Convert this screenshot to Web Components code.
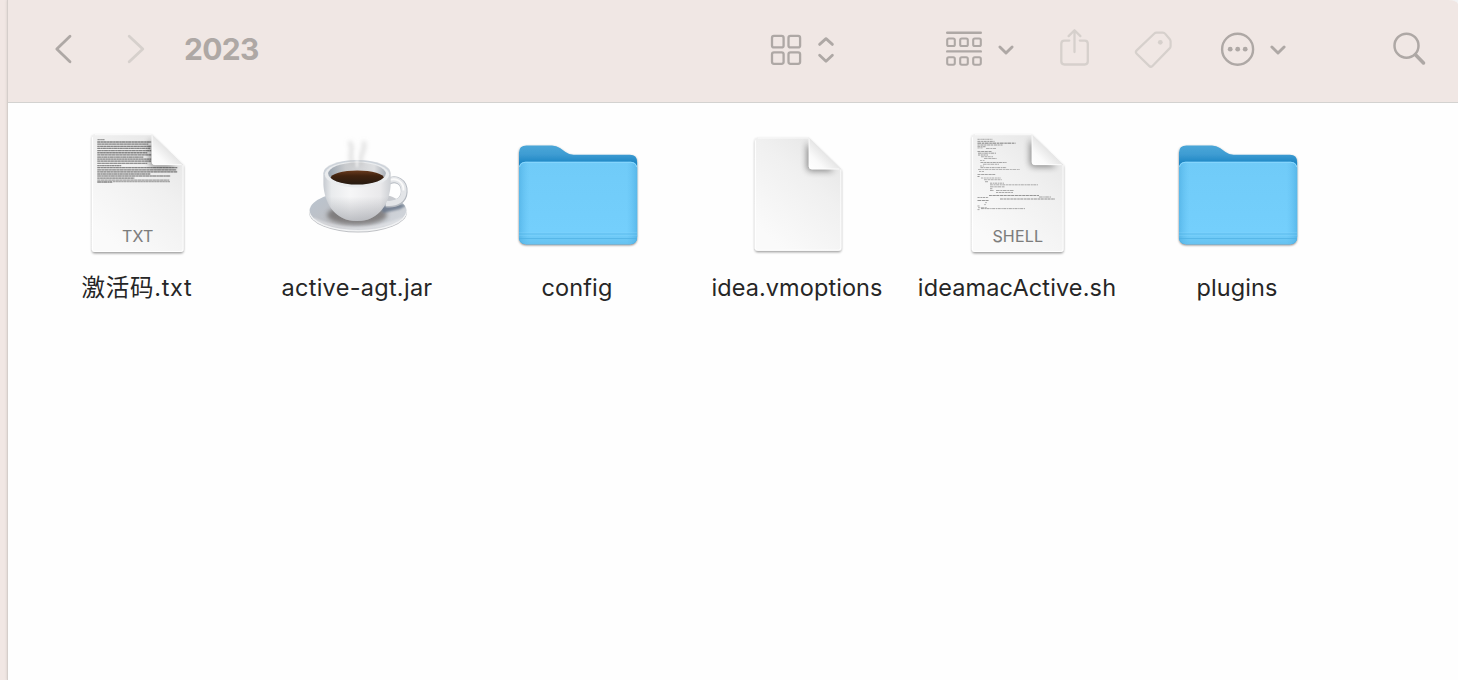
<!DOCTYPE html>
<html lang="zh">
<head>
<meta charset="utf-8">
<title>2023</title>
<style>
html,body{margin:0;height:100%;overflow:hidden}
body{background:linear-gradient(90deg,#f1e7e4 50%,#f3f4f5 50%);font-family:Inter,"Noto Sans CJK SC",sans-serif;color:#262626}
</style>
</head>
<body>
<finder-window>
  <finder-toolbar slot="toolbar" heading="2023"></finder-toolbar>
  <file-item kind="txt" style="--ls:.7px">激活码.txt</file-item>
  <file-item kind="jar" style="--ls:.28px">active-agt.jar</file-item>
  <file-item kind="folder" style="--ls:.1px">config</file-item>
  <file-item kind="blank" style="--ls:.08px">idea.vmoptions</file-item>
  <file-item kind="shell" style="--ls:.14px">ideamacActive.sh</file-item>
  <file-item kind="folder" style="--ls:.1px">plugins</file-item>
</finder-window>
<script>
// Toolbar glyphs: [viewBox, markup]
const GLYPHS = {
  back: ['52 29 22 40', '<path d="M70 36.2 56.8 49 70 61.8" stroke-width="2.8"/>'],
  forward: ['125 29 22 40', '<path d="M129.2 36.2 142.8 49 129.2 61.8" stroke-width="2.8"/>'],
  grid: ['768 29 36 40', '<g stroke-width="2.3"><rect x="772" y="35.9" width="11.6" height="11.5" rx="2"/><rect x="788.5" y="35.9" width="11.6" height="11.5" rx="2"/><rect x="772" y="52.3" width="11.6" height="11.5" rx="2"/><rect x="788.5" y="52.3" width="11.6" height="11.5" rx="2"/></g>'],
  updown: ['814 29 24 40', '<path d="M819.6 44.4 826 38.6 832.4 44.4M819.6 55.2 826 61.2 832.4 55.2" stroke-width="2.8"/>'],
  group: ['944 29 40 40', '<path d="M947.2 32.7H980.8M947.2 51.4H980.8" stroke-width="2.4"/><g stroke-width="2.1">' +
    [37.4, 56.1].map(y => [946.1, 959.1, 972.1].map(x => `<rect x="${x + 1.1}" y="${y + 1.1}" width="7.6" height="7.5" rx="1.6"/>`).join('')).join('') + '</g>'],
  chev: ['994 29 24 40', '<path d="M999.9 47 1006 53 1012.1 47" stroke-width="2.9"/>'],
  share: ['1056 27 38 42', '<path d="M1069.3 40.6H1064.4Q1061.3 40.6 1061.3 43.7V61.3Q1061.3 64.5 1064.4 64.5H1084.7Q1087.8 64.5 1087.8 61.3V43.7Q1087.8 40.6 1084.7 40.6H1079.8M1074.5 52V30.4M1068.6 36.1 1074.5 30.2 1080.4 36.1" stroke-width="2.3"/>'],
  tag: ['1132 28 42 42', '<path d="M1156.6 32.7H1162.8Q1164.3 32.7 1165.3 33.9L1169.8 39.2Q1170.6 40.2 1170.6 41.5V46Q1170.6 47.4 1169.6 48.4L1152.5 65.9Q1150.8 67.6 1149.1 65.9L1136.7 53.8Q1135 52.1 1136.7 50.4L1154.1 33.7Q1155.1 32.7 1156.6 32.7Z" stroke-width="2.2"/><circle cx="1160.3" cy="42.3" r="2.4" fill="currentColor" stroke="none"/>'],
  more: ['1218 29 40 40', '<circle cx="1237.6" cy="49.2" r="15.5" stroke-width="2.4"/><g fill="currentColor" stroke="none"><circle cx="1230.2" cy="49.2" r="2.4"/><circle cx="1237.7" cy="49.2" r="2.4"/><circle cx="1245.2" cy="49.2" r="2.4"/></g>'],
  search: ['1390.5 29 38 40', '<circle cx="1406" cy="45.7" r="12" stroke-width="2.5"/><path d="M1415 54.8 1423 62.9" stroke-width="3.6"/>']
};

class ToolGlyph extends HTMLElement {
  constructor() { super(); this.attachShadow({mode: 'open'}); }
  connectedCallback() {
    const [vb, art] = GLYPHS[this.getAttribute('name')];
    const [, , w, h] = vb.split(' ');
    this.shadowRoot.innerHTML = `<style>:host{display:block;flex:none;color:#aea8a5}:host([dim]){color:#d6d0cc}svg{display:block}</style>
      <svg width="${w}" height="${h}" viewBox="${vb}" fill="none" stroke="currentColor" stroke-linecap="round" stroke-linejoin="round">${art}</svg>`;
  }
}
customElements.define('tool-glyph', ToolGlyph);

class FinderToolbar extends HTMLElement {
  constructor() { super(); this.attachShadow({mode: 'open'}); }
  connectedCallback() {
    this.shadowRoot.innerHTML = `<style>
      :host{display:flex;align-items:center;height:98px;padding:0 29px 4px 44px;background:#f0e7e4;border-bottom:1px solid #d3d2d0}
      h1{margin:0 0 0 37px;font-size:30px;line-height:40px;font-weight:700;color:#aea8a5;width:81px;letter-spacing:-.7px;white-space:nowrap}
      .nav,.view,.actions{display:flex;align-items:center}
      .nav{gap:51px}
      .view{margin-left:auto;gap:10px}
      .actions{margin-left:106px}
      .pair{display:flex;gap:10px}
      .more{gap:8px;margin-left:44px}
    </style>
    <div class="nav"><tool-glyph name="back"></tool-glyph><tool-glyph name="forward" dim></tool-glyph></div>
    <h1>${this.getAttribute('heading')}</h1>
    <div class="view"><tool-glyph name="grid"></tool-glyph><tool-glyph name="updown"></tool-glyph></div>
    <div class="actions">
      <div class="pair"><tool-glyph name="group"></tool-glyph><tool-glyph name="chev"></tool-glyph></div>
      <tool-glyph name="share" dim style="margin:-2px 0 0 38px"></tool-glyph>
      <tool-glyph name="tag" dim style="margin-left:38px"></tool-glyph>
      <div class="pair more"><tool-glyph name="more"></tool-glyph><tool-glyph name="chev"></tool-glyph></div>
      <tool-glyph name="search" style="margin-left:101px"></tool-glyph>
    </div>`;
  }
}
customElements.define('finder-toolbar', FinderToolbar);

class FinderWindow extends HTMLElement {
  constructor() {
    super();
    this.attachShadow({mode: 'open'}).innerHTML = `<style>
      :host{display:flex;flex-direction:column;height:100vh;margin-left:8px;background:#fefefe;box-shadow:-1px 0 0 #d5cecb,-2px 0 2px #e2d9d6;border-top-right-radius:10px 4px;overflow:hidden;box-sizing:border-box}
      .files{display:grid;grid-template-columns:repeat(6,220px);padding:25px 0 0 19px}
    </style><slot name="toolbar"></slot><div class="files"><slot></slot></div>`;
  }
}
customElements.define('finder-window', FinderWindow);

// Miniature preview lines: [x, y, length, opacity]
const stroke = (rows, w, solid, dash) => rows.map(([x, y, l, o], i) =>
  `<path d="M${x} ${y}h${l}" stroke="#222" stroke-opacity="${o * solid}" stroke-width="${w}"/><path d="M${x} ${y}h${l}" stroke="#222" stroke-opacity="${o * dash}" stroke-width="${w}" stroke-dasharray="${2.1 + i % 3 * .7} .9 ${1.2 + i % 4 * .6} .7"/>`).join('');
const TXT_ROWS = [[97.5, 139.6, 7, .5],
  ...[54, 51, 54, 53, 54, 50, 54, 46, 54].map((l, i) => [97.3, 142 + i * 2.15, l, .62]),
  [97.3, 161.2, 54, .62], [97.3, 163.4, 50, .55], [97.3, 165.6, 24, .6], [97.3, 167.6, 80, .62], [97.3, 169.8, 79, .62], [97.3, 171.9, 80, .65], [97.3, 174, 53, .55],
  [97.3, 176, 73, .5], [97.3, 178.1, 37, .62], [97.3, 180.1, 72, .45], [97.3, 182, 15, .65], [113, 181.7, 57, .4]];
const SH_ROWS = [[977.5, 139.3, 15, .4], [977.5, 141.4, 17, .45], [977.5, 143.2, 38, .6], [977.5, 145, 25, .45], [977.5, 146.7, 8, .45],
  [986, 148.5, 10, .35], [977.5, 148, 5, .3], [977.5, 151.5, 14, .45], [978, 153.2, 18, .45], [978, 155, 10, .45], [981, 156.7, 12, .35], [984, 158.5, 13, .35],
  [980, 160.5, 5, .3], [980.5, 162.5, 26, .42], [983, 164.3, 16, .35], [980, 166, 4, .3], [980.5, 167.6, 26, .42], [978, 169.5, 42, .32], [979, 171.5, 5, .35],
  [977.5, 174.5, 18, .42], [977.5, 176.5, 2, .5], [981, 178, 20, .35], [984, 179.7, 18, .35], [985, 181.7, 3, .4],
  [990, 183.2, 14, .4], [990, 184.8, 48, .38], [990, 186.8, 15, .4], [990, 188.7, 3, .4], [990, 190.5, 4, .4], [996, 190.5, 18, .4], [996, 192.5, 17, .4],
  [989, 195.5, 50, .52], [1039, 197, 12, .42], [977.5, 197.5, 11, .45], [1000, 199, 55, .5], [977.5, 200.5, 11, .5],
  [985, 202.6, 2, .3], [984, 204.6, 2, .3], [977.5, 206, 2, .4], [978, 207.7, 9, .35], [981, 208.6, 44, .42], [977.5, 209.6, 2, .4]]
  .map(([x, y, l, o]) => [x - 880, y, l, o]);

const page = (l, t, r, b, fx, fy, body = '') => {
  const sheet = `M${l + 3} ${t}H${fx}L${r} ${fy}V${b - 3}Q${r} ${b} ${r - 3} ${b}H${l + 3}Q${l} ${b} ${l} ${b - 3}V${t + 3}Q${l} ${t} ${l + 3} ${t}Z`;
  return `
  <defs>
    <linearGradient id="pg" x1="1" y1="0" x2=".35" y2="1"><stop offset="0" stop-color="#e3e3e3"/><stop offset=".45" stop-color="#f0f0f0"/><stop offset="1" stop-color="#fafafa"/></linearGradient>
    <linearGradient id="fold" x1="0" y1="1" x2=".55" y2=".45"><stop offset="0" stop-color="#fff"/><stop offset=".45" stop-color="#fafafa"/><stop offset="1" stop-color="#e2e2e2"/></linearGradient>
    <filter id="ds" x="-20%" y="-20%" width="140%" height="140%"><feDropShadow dx="0" dy="1.4" stdDeviation="1.1" flood-opacity=".4"/></filter>
    <filter id="bl" x="-50%" y="-50%" width="200%" height="200%"><feGaussianBlur stdDeviation="3"/></filter>
    <clipPath id="pc"><path d="${sheet}"/></clipPath>
  </defs>
  <path filter="url(#ds)" d="${sheet}" fill="url(#pg)"/>
  <g clip-path="url(#pc)"><path d="M${l + 3} ${t + .5}H${fx}M${l + .5} ${t + 3}V${b - 3}Q${l + .5} ${b - .5} ${l + 3} ${b - .5}H${r - 3}Q${r - .5} ${b - .5} ${r - .5} ${b - 3}V${fy}" fill="none" stroke="#fff"/>
  ${body}
  <path d="M${fx - 2} ${t + 5}V${fy - 2}Q${fx - 2} ${fy + 2} ${fx + 3} ${fy + 2}H${r - 7}Z" fill="#000" opacity=".42" filter="url(#bl)"/></g>
  <path d="M${fx} ${t + .2}V${fy - 3}Q${fx} ${fy} ${fx + 3} ${fy}H${r - .2}Z" fill="url(#fold)"/>
  <path d="M${fx + .3} ${t + 1}V${fy - 3}Q${fx + .3} ${fy - .3} ${fx + 3} ${fy - .3}H${r - 2}" fill="none" stroke="#fff" stroke-width=".8"/>`;
};

const badge = (t, w) => `<text x="137.7" y="242" text-anchor="middle" textLength="${w}" font-family="Inter,sans-serif" font-size="16" fill="#7c7c7c" stroke="#7c7c7c" stroke-width=".1">${t}</text>`;

const FRONT = 'M519 168.5Q519 161.8 525.5 161.8H630.6Q637.1 161.8 637.1 168.5V237Q637.1 244.2 630 244.2H526Q519 244.2 519 237Z';
const CUP = 'M323.4 174C323.4 165 338 160 357 160S390.7 165 390.7 174V184C390 202 380 221 357 221S324 202 323.4 184Z';

const ART = {
  txt: ['67 128 140 130', page(91.9, 134.2, 183.6, 252, 151.8, 165, stroke(TXT_ROWS, 1.3, .55, .4)) + badge('TXT', 31.5)],
  shell: ['67 128 140 130', page(91.9, 134.2, 183.6, 252, 151.8, 165, stroke(SH_ROWS, .95, .25, .75)) + badge('SHELL', 50.5)],
  blank: ['727 128 140 130', page(754.8, 137.4, 841.4, 250.7, 808.8, 169.3)],
  folder: ['507 128 140 130', `
    <defs>
      <linearGradient id="bk" x1="0" y1="145" x2="0" y2="163" gradientUnits="userSpaceOnUse"><stop offset="0" stop-color="#4ba7d8"/><stop offset=".5" stop-color="#3f9dd3"/><stop offset="1" stop-color="#1f86c4"/></linearGradient>
      <linearGradient id="fr" x1="0" y1="0" x2="0" y2="1"><stop offset="0" stop-color="#70cbf8"/><stop offset=".85" stop-color="#74cffc"/><stop offset="1" stop-color="#66c2f0"/></linearGradient>
      <linearGradient id="sd" x1="0" x2="1"><stop offset="0" stop-color="#3fa3da" stop-opacity=".5"/><stop offset=".09" stop-color="#5bb9ec" stop-opacity="0"/><stop offset=".91" stop-color="#5bb9ec" stop-opacity="0"/><stop offset="1" stop-color="#3fa3da" stop-opacity=".5"/></linearGradient>
      <filter id="ds" x="-10%" y="-10%" width="120%" height="125%"><feDropShadow dx="0" dy="1" stdDeviation=".9" flood-opacity=".5"/></filter>
    </defs>
    <path filter="url(#ds)" d="M519 152.5Q519 145.4 526.5 145.4H552Q556.5 145.4 560 148L565.5 152Q569 154.7 573.5 154.7H630Q637.1 154.7 637.1 162V237Q637.1 244.2 630 244.2H526Q519 244.2 519 237Z" fill="url(#bk)"/>
    <path d="${FRONT}" fill="url(#fr)"/>
    <path d="${FRONT}" fill="url(#sd)"/>
    <path d="M519.5 167Q520.5 162.3 525.5 162.3H630.6Q635.6 162.3 636.6 167" fill="none" stroke="#8ddaff" stroke-width=".9"/>
    <path d="M519 234H637M519 238.5H636.5" stroke="#4dafe2" stroke-width=".9" opacity=".75"/>
    <path d="M519 235.2H637M519 232.8H637" stroke="#8bdaff" stroke-width=".7" opacity=".5"/>`],
  jar: ['287 128 140 130', `
    <defs>
      <linearGradient id="sc" x1="0" x2="1" y1="0" y2=".5"><stop offset="0" stop-color="#b9c4d0"/><stop offset=".5" stop-color="#bfc0c4"/><stop offset="1" stop-color="#cfd3d9"/></linearGradient>
      <linearGradient id="cp" x1="0" x2="1"><stop offset="0" stop-color="#c6cad0"/><stop offset=".12" stop-color="#e9ebed"/><stop offset=".4" stop-color="#f6f6f7"/><stop offset=".85" stop-color="#e9e9eb"/><stop offset="1" stop-color="#cdd0d4"/></linearGradient>
      <linearGradient id="sh" x1="0" x2="0" y1="0" y2="1"><stop offset=".6" stop-color="#777b84" stop-opacity="0"/><stop offset="1" stop-color="#777b84" stop-opacity=".45"/></linearGradient>
      <linearGradient id="in" x1="0" x2="1"><stop offset="0" stop-color="#98a2ad"/><stop offset=".3" stop-color="#c9cbce"/><stop offset=".8" stop-color="#dedfe1"/><stop offset="1" stop-color="#aab0b8"/></linearGradient>
      <linearGradient id="cf" x1="0" x2="0" y1="0" y2="1"><stop offset="0" stop-color="#6a3b1e"/><stop offset=".35" stop-color="#40220f"/><stop offset="1" stop-color="#231a12"/></linearGradient>
      <filter id="b2" filterUnits="userSpaceOnUse" x="287" y="128" width="140" height="130"><feGaussianBlur stdDeviation="2.2"/></filter>
      <filter id="b1" filterUnits="userSpaceOnUse" x="287" y="128" width="140" height="130"><feGaussianBlur stdDeviation="1.3"/></filter>
      <clipPath id="sa"><ellipse cx="358" cy="211.2" rx="48.6" ry="19.8"/></clipPath>
      <clipPath id="rim"><ellipse cx="357" cy="173.6" rx="28.7" ry="11"/></clipPath>
    </defs>
    <ellipse cx="358" cy="212.2" rx="49" ry="20.3" fill="#bfc1c5"/>
    <ellipse cx="358" cy="211.5" rx="48.9" ry="20" fill="#f3f4f5"/>
    <ellipse cx="358" cy="210.5" rx="48.2" ry="19.4" fill="url(#sc)"/>
    <g clip-path="url(#sa)"><ellipse cx="357" cy="215" rx="30" ry="10" fill="#56514f" opacity=".6" filter="url(#b2)"/><path d="M380 207Q394 202 407 205L400 209 383 213Z" fill="#5b6b80" opacity=".75" filter="url(#b1)"/><path d="M313 219Q355 238 403 219" fill="none" stroke="#e6e7ea" stroke-width="3" opacity=".7" filter="url(#b1)"/></g>
    <path d="M387 182C396 176.5 404.6 182 404.2 192C403.8 200 397 205 386 203.8" fill="none" stroke="#b4b9c0" stroke-width="6.8"/>
    <path d="M387 181.8C396 176.3 404.3 182 403.9 191.6C403.5 199.6 397 204.3 386 203.2" fill="none" stroke="#e3e5e8" stroke-width="5.4"/>
    <path d="M388 180.8C397 176.5 403.8 182.5 403.5 190.5" fill="none" stroke="#fafafa" stroke-width="2"/>
    <path d="${CUP}" fill="url(#cp)"/>
    <path d="${CUP}" fill="url(#sh)"/>
    <ellipse cx="357" cy="173.3" rx="33.2" ry="13.3" fill="#cdd3da"/>
    <ellipse cx="357" cy="174.5" rx="32.2" ry="13" fill="#eaecee"/>
    <ellipse cx="357" cy="173.6" rx="28.8" ry="11" fill="url(#in)"/>
    <g clip-path="url(#rim)"><ellipse cx="357.3" cy="178.2" rx="26.8" ry="7.7" fill="url(#cf)"/></g>
    <g fill="none" stroke-linecap="round" filter="url(#b2)"><path d="M353 164C347 157 355 150 350 143" stroke="#bdbdbd" stroke-width="4.5" opacity=".42"/><path d="M361 164C358 157 366 150 364 143" stroke="#bdbdbd" stroke-width="4.5" opacity=".42"/></g>
    <g fill="none" stroke-linecap="round" filter="url(#b1)"><path d="M357 166Q358 158 356 151" stroke="#fff" stroke-width="2.5" opacity=".55"/></g>`]
};

class FileItem extends HTMLElement {
  constructor() { super(); this.attachShadow({mode: 'open'}); }
  connectedCallback() {
    const [vb, art] = ART[this.getAttribute('kind')];
    this.shadowRoot.innerHTML = `<style>
      :host{display:flex;flex-direction:column;align-items:center;width:220px}
      svg{display:block}
      .name{margin-top:14px;font-size:23.5px;line-height:32px;letter-spacing:var(--ls,0);white-space:nowrap}
    </style>
    <svg width="140" height="130" viewBox="${vb}">${art}</svg>
    <div class="name"><slot></slot></div>`;
  }
}
customElements.define('file-item', FileItem);
</script>
</body>
</html>
